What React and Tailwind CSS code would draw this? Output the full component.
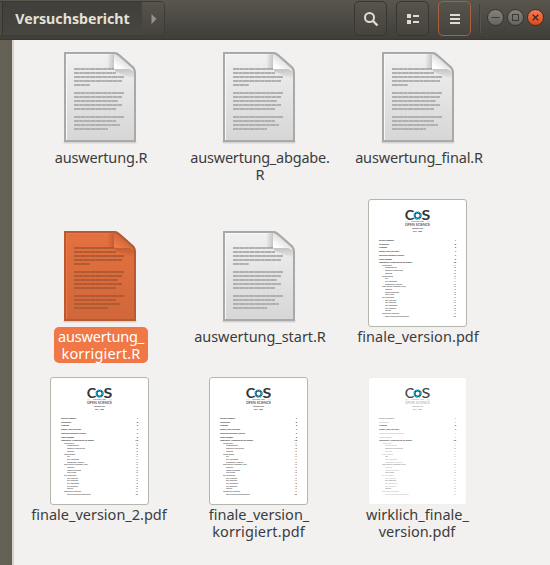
const docLines = [[0,40],[1,42],[2,50],[3,48],[4,16],[6,50],[7,48],[8,44],[9,48],[10,42],[12,50],[13,42],[14,46],[15,34]];

function Doc({ selected }) {
  const id = selected ? 's' : 'n';
  const c = selected
    ? { edge: '#b65a34', top: '#e5713f', bot: '#d0673a', ink: '#b05a34', hi: '#ec7743', fold: '#ee7943', foldB: '#c8623a', sh: '#8a3f1e' }
    : { edge: '#a9a9a9', top: '#f1f1f1', bot: '#d6d6d6', ink: '#b0b0b0', hi: '#f8f8f8', fold: '#ffffff', foldB: '#d8d8d8', sh: '#777777' };
  return (
    <svg width="76" height="94" viewBox="-2 0 76 94" className="block">
      <defs>
        <linearGradient id={'b' + id} x1="0" y1="0" x2="0" y2="1"><stop offset="0" stopColor={c.top} /><stop offset="1" stopColor={c.bot} /></linearGradient>
        <linearGradient id={'f' + id} x1="0.25" y1="0.8" x2="0.65" y2="0.3"><stop offset="0" stopColor={c.fold} /><stop offset="1" stopColor={c.foldB} /></linearGradient>
        <linearGradient id={'h' + id} x1="0" y1="0" x2="1" y2="0"><stop offset="0" stopColor={c.sh} stopOpacity="0" /><stop offset="1" stopColor={c.sh} stopOpacity="0.35" /></linearGradient>
        <linearGradient id={'v' + id} x1="0" y1="0" x2="0" y2="1"><stop offset="0" stopColor={c.sh} stopOpacity="0.35" /><stop offset="1" stopColor={c.sh} stopOpacity="0" /></linearGradient>
      </defs>
      <rect x="-0.5" y="88" width="73" height="3.5" rx="1.5" fill="#000" opacity="0.12" />
      <path d="M1 1H50Q53 1 56 4L69 15.5Q71 17.5 71 21V89H1Z" fill={'url(#b' + id + ')'} stroke={c.edge} strokeWidth="2" />
      <path d="M2.5 88V2.5H50" fill="none" stroke={c.hi} strokeWidth="1" />
      {docLines.map(([n, w]) => (
        <g key={n} stroke={c.ink} strokeWidth="2">
          <path d={`M10 ${17 + n * 4}h${w}`} opacity="0.5" />
          <path d={`M10 ${17 + n * 4}h${w}`} strokeDasharray={n % 2 ? '5.4 0.6 3.4 0.6 6.4 0.6 4.4 0.6' : '6.4 0.6 4.4 0.6 3.4 0.6 5.4 0.6'} />
        </g>
      ))}
      <path d="M43 2H50V17H43Z" fill={'url(#h' + id + ')'} />
      <path d="M50 17H66L70 20V27L52 20Z" fill={'url(#v' + id + ')'} />
      <path d="M50 2Q53 2 56 4L69 16Q70 17 70 20Q66 16 60 17H50Z" fill={'url(#f' + id + ')'} />
      <path d="M50 1Q53 1 56 4L69 15.5Q71 17.5 71 21" fill="none" stroke={c.edge} strokeWidth="2" />
    </svg>
  );
}

const toc = [
  [42, 11, 'Executive Summary', 15, 1], [46, 11, 'Introduction', 10, 2], [49.5, 11, 'Findings', 8, 3], [53.5, 11, 'Mission, Vision, and Goals', 20, 4],
  [57, 11, 'Values and Operating Principles', 25, 7], [61, 11, 'Global Roadmap', 13, 9], [64.5, 11, 'Supplement: Accomplishing the Mission', 33, 10],
  [67.2, 14, 'Infrastructure', 10, 11], [69.8, 17, 'Sustainability', 12, 12], [72.5, 17, 'Community Interventions', 18, 12], [75.2, 17, 'Metrics', 7, 13],
  [78, 14, 'Integrations', 11, 13], [80.8, 17, 'OSF', 3, 14], [83.4, 17, 'OSF Meetings', 12, 14], [86, 17, 'Community Training', 17, 15],
  [88.6, 14, 'Open Source Framework (OSF)', 24, 15], [91.5, 17, 'Features', 7, 16], [94.2, 17, 'Roles and goals', 14, 16], [96.8, 17, 'Public Data', 9, 16],
  [99.5, 14, 'OSF Collections', 12, 17], [102.2, 17, 'OSF Preprints', 11, 17], [104.8, 17, 'OSF Meetings', 11, 17], [107.5, 17, 'OSF Institutions', 12, 18],
  [110, 17, 'OSF Registries', 11, 18], [112.6, 17, 'Metrics', 6, 19], [115.5, 14, 'Community Incentives', 17, 19], [118.2, 17, 'Open Practices and Sustainability', 24, 20],
];

function Paper({ faint }) {
  return (
    <svg width="99" height="128" viewBox="0 0 99 128" className="block" fontFamily="Open Sans, Noto Sans, sans-serif">
      <rect x="0.5" y="0.5" width="98" height="127" rx="2.5" fill="#fff" stroke={faint ? '#efefed' : '#b4b7ae'} />
      <text x="36.7" y="21.2" fontFamily="Lato, sans-serif" fontSize="12.6" fontWeight={faint ? 500 : 700} fill={faint ? '#444' : '#353535'} textLength="9.5" lengthAdjust="spacingAndGlyphs">C</text>
      <text x="53.4" y="21.2" fontFamily="Lato, sans-serif" fontSize="12.6" fontWeight={faint ? 500 : 700} fill={faint ? '#444' : '#353535'} textLength="8.8" lengthAdjust="spacingAndGlyphs">S</text>
      <circle cx="49.6" cy="16.6" r="2.9" fill="none" stroke="#27404b" strokeWidth="1.7" />
      <circle cx="49.6" cy="16.6" r="3.4" fill="none" stroke="#28a9cf" strokeWidth="1.7" strokeDasharray="1.6 1.07" />
      <g fill={faint ? '#999' : '#333'} textAnchor="middle">
        <text x="49.5" y="23.3" fontSize="1.2" textLength="13" lengthAdjust="spacingAndGlyphs">CENTER FOR</text>
        <path d="M37 22.8h3.5M58.5 22.8H62" stroke="#bbb" strokeWidth="0.5" />
        <text x="49.5" y="26.6" fontSize="3" fontWeight={faint ? 400 : 600} textLength="25" lengthAdjust="spacingAndGlyphs">OPEN SCIENCE</text>
        <text x="49.5" y="29.7" fontSize="1.8" fontWeight="700" textLength="11" lengthAdjust="spacingAndGlyphs">Strategic Plan</text>
        <text x="49.5" y="32.6" fontSize="1.8" fontWeight="700" textLength="9" lengthAdjust="spacingAndGlyphs">2017 - 2020</text>
      </g>
      {toc.map(([y, x, t, w, p], i) => {
        const strong = i === 2 || i === 3 || i === 6;
        const o = faint ? (strong ? 0.9 : i % 3 === 0 ? 0.6 : 0.35) : i < 7 ? 1 : 0.9;
        return (
          <g key={i} fill="#222" opacity={o} fontSize={i < 7 ? 2.3 : 1.9} fontWeight={i < 7 ? 700 : 600}>
            <text x={x} y={y - 0.5} textLength={w} lengthAdjust="spacingAndGlyphs">{t}</text>
            <text x="88" y={y - 0.5} textAnchor="end">{p}</text>
          </g>
        );
      })}
    </svg>
  );
}

const files = [
  ['doc', [['auswertung.R', 'tracking-[-0.17px]']]],
  ['doc', [['auswertung_abgabe.', 'tracking-[-0.21px]'], ['R', '']]],
  ['doc', [['auswertung_final.R', 'tracking-[-0.16px]']]],
  ['sel', [['auswertung_', 'tracking-[-0.2px]'], ['korrigiert.R', 'tracking-[0.15px]']]],
  ['doc', [['auswertung_start.R', 'tracking-[-0.05px]']]],
  ['pdf', [['finale_version.pdf', 'tracking-[0.05px]']]],
  ['pdf', [['finale_version_2.pdf', 'pr-[2px]']]],
  ['pdf', [['finale_version_', 'tracking-[0px]'], ['korrigiert.pdf', 'tracking-[0.12px] pr-px']]],
  ['faint', [['wirklich_finale_', 'pr-px'], ['version.pdf', 'pr-[2px]']]],
];

function File({ kind, lines }) {
  const sel = kind === 'sel';
  const paper = kind === 'pdf' || kind === 'faint';
  return (
    <div className="flex flex-col items-center justify-start">
      <div className={`flex h-[128px] shrink-0 flex-col items-center justify-end ${paper ? 'pr-px' : 'pb-[2px]'}`}>
        {paper ? <Paper faint={kind === 'faint'} /> : <Doc selected={sel} />}
      </div>
      <div className={`flex flex-col items-center rounded-[5px] px-1 pt-px text-[14.5px] leading-[17px] whitespace-nowrap ${paper ? '' : 'ml-[2px]'} ${sel ? 'bg-[#f07746] pb-px text-white' : 'text-[#3c3c3c]'}`}>
        {lines.map(([t, c]) => <span key={t} className={c}>{t}</span>)}
      </div>
    </div>
  );
}

const btn = 'flex h-[35px] w-[33px] items-center justify-center rounded-[5px] border bg-gradient-to-b from-[#57544c] to-[#45433d]';
const winBtn = 'flex h-[17px] w-[17px] items-center justify-center rounded-full border border-[#35342f]';

export default function App() {
  return (
    <div className="flex h-[565px] w-[550px] flex-col overflow-hidden bg-[#f2f1f0] font-['Noto_Sans','Open_Sans',sans-serif]">
      <header className="flex h-10 shrink-0 items-start border-b border-[#393832] bg-gradient-to-b from-[#5a564e] to-[#3f3e39] pt-px">
        <div className="flex h-[35px] w-[165px] overflow-hidden rounded-r-[5px] border border-l-0 border-[#3c3b36]">
          <div className="w-[3px] border-r border-[#34332e] bg-[#4c4a43]" />
          <div className="flex w-[139px] items-center justify-center bg-gradient-to-b from-[#403f39] to-[#474640] text-[14.2px] font-bold text-[#e6e1d6]">Versuchsbericht</div>
          <div className="flex flex-1 items-center justify-center bg-gradient-to-b from-[#57544c] to-[#45433d] pl-[2px]">
            <svg width="6" height="10"><path d="M0.5 0L5.5 5L0.5 10Z" fill="#96928a" /></svg>
          </div>
        </div>
        <div className="ml-[189px] flex gap-[9px]">
          <div className={`${btn} border-[#37362f]`}>
            <svg width="16" height="16" fill="none" stroke="#e0dcd2"><circle cx="6.5" cy="6.5" r="4.5" strokeWidth="2" /><path d="M10 10l4.5 4.5" strokeWidth="2.4" /></svg>
          </div>
          <div className={`${btn} border-[#37362f]`}>
            <svg width="12" height="10" fill="#e0dcd2"><path d="M0 0h4v4H0zM0 6h4v4H0zM6 1h6v2H6zM6 7h6v2H6z" /></svg>
          </div>
          <div className={`${btn} border-[#a8603f]`}>
            <svg width="10" height="10" fill="#e0dcd2"><path d="M0 0h10v2H0zM0 4h10v2H0zM0 8h10v2H0z" /></svg>
          </div>
        </div>
        <div className="mt-[3px] ml-[8px] h-[29px] w-[2px] border-l border-[#3f3e38] bg-[#56534b]" />
        <div className="mt-[8px] ml-[6px] flex gap-[3px]">
          <div className={`${winBtn} bg-gradient-to-b from-[#85827b] to-[#67655e]`}><svg width="9" height="9"><path d="M0.5 4.5H8.5" stroke="#3c3b36" /></svg></div>
          <div className={`${winBtn} bg-gradient-to-b from-[#85827b] to-[#67655e]`}><svg width="9" height="9"><rect x="1.5" y="1.5" width="6" height="6" fill="none" stroke="#3c3b36" /></svg></div>
          <div className={`${winBtn} bg-gradient-to-b from-[#f47a50] to-[#dd491b]`}><svg width="7" height="7"><path d="M0.7 0.7L6.3 6.3M6.3 0.7L0.7 6.3" stroke="#45271a" strokeWidth="1.3" /></svg></div>
        </div>
      </header>
      <div className="flex min-h-0 flex-1">
        <aside className="w-[12px] shrink-0 bg-[#646054]" />
        <div className="w-[2px] shrink-0 bg-[#d6d3cf]" />
        <main className="-mt-5 ml-[6.5px] grid grid-cols-[159px_159px_159px] grid-rows-[179px_178px_178px]">
          {files.map(([kind, lines], i) => <File key={i} kind={kind} lines={lines} />)}
        </main>
      </div>
    </div>
  );
}
